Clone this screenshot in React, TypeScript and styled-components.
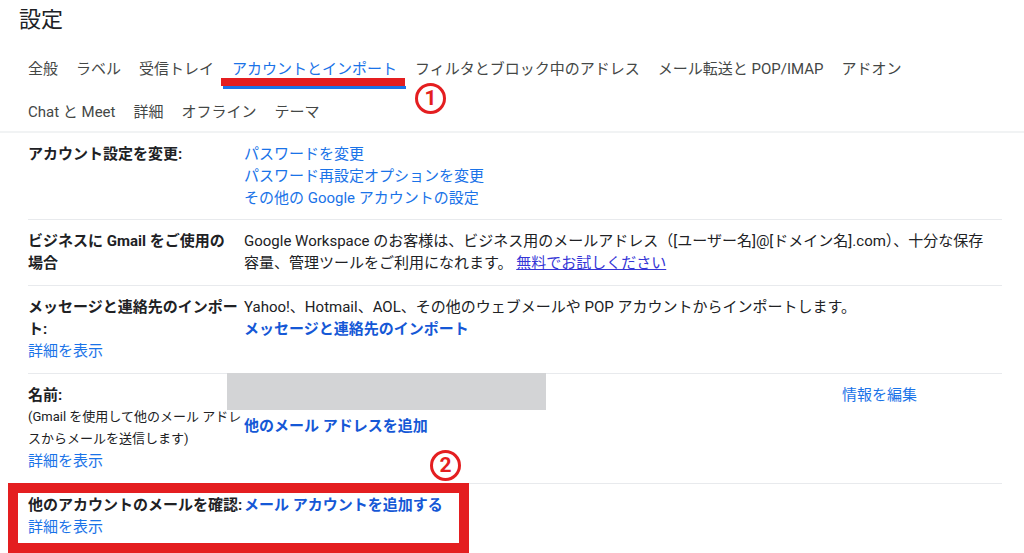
import React from "react";
import styled, { createGlobalStyle } from "styled-components";

const GlobalStyle = createGlobalStyle`
  html, body { margin: 0; padding: 0; background: #ffffff; }
  body {
    overflow: hidden;
    font-family: Roboto, "Noto Sans CJK JP", sans-serif;
    color: #202124;
  }
`;

const Page = styled.div`
  position: relative;
  width: 1024px;
  height: 553px;
  overflow: hidden;
  background: #ffffff;
`;

const Title = styled.h1`
  margin: 0 0 12px;
  padding: 6px 0 0 19px;
  font-size: 22px;
  line-height: 28px;
  font-weight: 400;
  color: #202124;
`;

const TabBar = styled.nav`
  padding-left: 19px;
  border-bottom: 2px solid #f1f3f4;
`;

const TabRow = styled.div<{ $height: number }>`
  display: flex;
  height: ${(p) => p.$height}px;
`;

const Tab = styled.div<{ $active?: boolean }>`
  display: flex;
  align-items: center;
  box-sizing: border-box;
  padding: 3px 9px 0;
  border-bottom: 3px solid ${(p) => (p.$active ? "#1a73e8" : "transparent")};
  font-size: 15px;
  white-space: nowrap;
  color: ${(p) => (p.$active ? "#1a73e8" : "#444746")};
`;

const Content = styled.section`
  padding: 0 22px 0 28px;
`;

const SettingRow = styled.div`
  position: relative;
  display: grid;
  grid-template-columns: 216px 1fr 160px;
  padding: 10px 0 11px;
  border-top: 1px solid #e8eaed;
  font-size: 15px;
  line-height: 22px;
  &:first-child {
    border-top: none;
    padding-bottom: 10px;
  }
`;

const Label = styled.div<{ $nowrap?: boolean }>`
  font-weight: 700;
  color: #202124;
  white-space: ${(p) => (p.$nowrap ? "nowrap" : "normal")};
`;

const LabelNote = styled.div`
  font-size: 13px;
  line-height: 22px;
  color: #202124;
`;

const Value = styled.div<{ $span?: boolean; $pad?: number }>`
  position: relative;
  grid-column: ${(p) => (p.$span ? "2 / 4" : "auto")};
  padding-top: ${(p) => p.$pad ?? 0}px;
  color: #202124;
`;

const Action = styled.div`
  color: #1a73e8;
`;

const LinkLine = styled.div<{ $bold?: boolean }>`
  color: ${(p) => (p.$bold ? "#1558d6" : "#1a73e8")};
  font-weight: ${(p) => (p.$bold ? 700 : 400)};
`;

const InlineLink = styled.span<{ $bold?: boolean }>`
  color: ${(p) => (p.$bold ? "#1558d6" : "#1a73e8")};
  font-weight: ${(p) => (p.$bold ? 700 : 400)};
`;

const TrialLink = styled.span`
  color: #3535d6;
  text-decoration: underline;
`;

const Redaction = styled.div`
  position: absolute;
  left: -17px;
  top: -11px;
  width: 319px;
  height: 37px;
  background: #d3d4d6;
`;

const Highlight = styled.div`
  position: absolute;
  left: -20px;
  top: -1px;
  width: 461px;
  height: 70px;
  box-sizing: border-box;
  border: 10px solid #e41e20;
  pointer-events: none;
`;

const MarkBar = styled.div`
  position: absolute;
  left: 221px;
  top: 78px;
  width: 184px;
  height: 8px;
  background: #e41e20;
`;

const Marker = styled.span<{ $left: number; $top: number }>`
  position: absolute;
  left: ${(p) => p.$left}px;
  top: ${(p) => p.$top}px;
  width: 31px;
  height: 31px;
  box-sizing: border-box;
  border: 3px solid #e41e20;
  border-radius: 50%;
  display: flex;
  align-items: center;
  justify-content: center;
  color: #e41e20;
  font-family: Roboto, "Noto Sans CJK JP", sans-serif;
  font-weight: 700;
  font-size: 21px;
  line-height: 1;
`;

const tabs1 = [
  "全般",
  "ラベル",
  "受信トレイ",
  "アカウントとインポート",
  "フィルタとブロック中のアドレス",
  "メール転送と POP/IMAP",
  "アドオン",
];
const tabs2 = ["Chat と Meet", "詳細", "オフライン", "テーマ"];

export default function App() {
  return (
    <Page>
      <GlobalStyle />
      <Title>設定</Title>
      <TabBar>
        <TabRow $height={43}>
          {tabs1.map((t) => (
            <Tab key={t} $active={t === "アカウントとインポート"}>
              {t}
            </Tab>
          ))}
        </TabRow>
        <TabRow $height={42}>
          {tabs2.map((t) => (
            <Tab key={t}>{t}</Tab>
          ))}
        </TabRow>
      </TabBar>

      <Content>
        <SettingRow>
          <Label>アカウント設定を変更:</Label>
          <Value $span>
            <LinkLine>パスワードを変更</LinkLine>
            <LinkLine>パスワード再設定オプションを変更</LinkLine>
            <LinkLine>その他の Google アカウントの設定</LinkLine>
          </Value>
        </SettingRow>

        <SettingRow>
          <Label>
            ビジネスに Gmail をご使用の
            <br />
            場合
          </Label>
          <Value $span>
            Google Workspace のお客様は、ビジネス用のメールアドレス（[ユーザー名]@[ドメイン名].com）、十分な保存
            <br />
            容量、管理ツールをご利用になれます。 <TrialLink>無料でお試しください</TrialLink>
          </Value>
        </SettingRow>

        <SettingRow>
          <div>
            <Label>
              メッセージと連絡先のインポー
              <br />
              ト:
            </Label>
            <LinkLine>詳細を表示</LinkLine>
          </div>
          <Value $span>
            Yahoo!、Hotmail、AOL、その他のウェブメールや POP アカウントからインポートします。
            <LinkLine $bold>メッセージと連絡先のインポート</LinkLine>
          </Value>
        </SettingRow>

        <SettingRow>
          <div>
            <Label>名前:</Label>
            <LabelNote>
              (Gmail を使用して他のメール アドレ
              <br />
              スからメールを送信します)
            </LabelNote>
            <LinkLine>詳細を表示</LinkLine>
          </div>
          <Value $pad={31}>
            <Redaction />
            <LinkLine $bold>他のメール アドレスを追加</LinkLine>
          </Value>
          <Action>情報を編集</Action>
        </SettingRow>

        <SettingRow>
          <div>
            <Label $nowrap>他のアカウントのメールを確認:</Label>
            <LinkLine>詳細を表示</LinkLine>
          </div>
          <Value $span>
            <InlineLink $bold>メール アカウントを追加する</InlineLink>
          </Value>
          <Highlight />
        </SettingRow>
      </Content>

      <MarkBar />
      <Marker $left={415} $top={83}>1</Marker>
      <Marker $left={430} $top={450}>2</Marker>
    </Page>
  );
}
